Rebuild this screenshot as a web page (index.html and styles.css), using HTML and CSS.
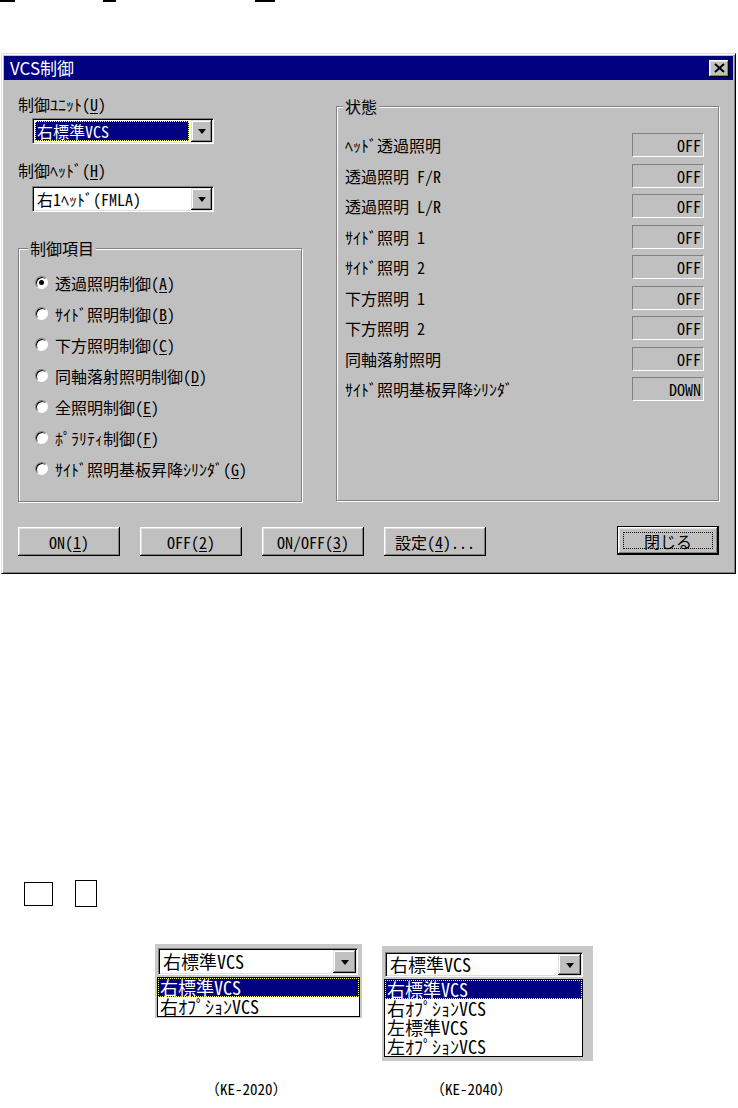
FILE: index.html
```html
<!DOCTYPE html>
<html lang="ja">
<head>
    <meta charset="UTF-8">
    <title>VCS制御</title>
    <link rel="stylesheet" href="styles.css">
</head>
<body>
    <div class="top-marks">
        <span class="top-mark top-mark-1"></span>
        <span class="top-mark top-mark-2"></span>
        <span class="top-mark top-mark-3"></span>
    </div>

    <div class="dialog">
        <div class="titlebar">
            <span class="title">VCS制御</span>
            <span class="close-btn">
                <svg width="11" height="10" viewBox="0 0 11 10"><path d="M1 1 L10 9 M10 1 L1 9" stroke="#000" stroke-width="2" fill="none"/></svg>
            </span>
        </div>

        <div class="dialog-body">
            <div class="columns">
                <div class="col-left">
                    <div class="label">制御ﾕﾆｯﾄ(<u>U</u>)</div>
                    <div class="combo combo-unit">
                        <div class="combo-field selected"><span>右標準VCS</span></div>
                        <div class="drop-btn"><span class="arrow"></span></div>
                    </div>

                    <div class="label label-head">制御ﾍｯﾄﾞ(<u>H</u>)</div>
                    <div class="combo combo-head">
                        <div class="combo-field"><span>右1ﾍｯﾄﾞ(FMLA)</span></div>
                        <div class="drop-btn"><span class="arrow"></span></div>
                    </div>

                    <div class="group group-items">
                        <span class="group-title">制御項目</span>
                        <ul class="radio-list">
                            <li class="radio-item"><span class="radio checked"></span><span>透過照明制御(<u>A</u>)</span></li>
                            <li class="radio-item"><span class="radio"></span><span>ｻｲﾄﾞ照明制御(<u>B</u>)</span></li>
                            <li class="radio-item"><span class="radio"></span><span>下方照明制御(<u>C</u>)</span></li>
                            <li class="radio-item"><span class="radio"></span><span>同軸落射照明制御(<u>D</u>)</span></li>
                            <li class="radio-item"><span class="radio"></span><span>全照明制御(<u>E</u>)</span></li>
                            <li class="radio-item"><span class="radio"></span><span>ﾎﾟﾗﾘﾃｨ制御(<u>F</u>)</span></li>
                            <li class="radio-item"><span class="radio"></span><span>ｻｲﾄﾞ照明基板昇降ｼﾘﾝﾀﾞ(<u>G</u>)</span></li>
                        </ul>
                    </div>
                </div>

                <div class="col-right">
                    <div class="group group-state">
                        <span class="group-title">状態</span>
                        <div class="status-list">
                            <div class="status-row"><span>ﾍｯﾄﾞ透過照明</span><span class="status-value">OFF</span></div>
                            <div class="status-row"><span>透過照明 F/R</span><span class="status-value">OFF</span></div>
                            <div class="status-row"><span>透過照明 L/R</span><span class="status-value">OFF</span></div>
                            <div class="status-row"><span>ｻｲﾄﾞ照明 1</span><span class="status-value">OFF</span></div>
                            <div class="status-row"><span>ｻｲﾄﾞ照明 2</span><span class="status-value">OFF</span></div>
                            <div class="status-row"><span>下方照明 1</span><span class="status-value">OFF</span></div>
                            <div class="status-row"><span>下方照明 2</span><span class="status-value">OFF</span></div>
                            <div class="status-row"><span>同軸落射照明</span><span class="status-value">OFF</span></div>
                            <div class="status-row"><span>ｻｲﾄﾞ照明基板昇降ｼﾘﾝﾀﾞ</span><span class="status-value">DOWN</span></div>
                        </div>
                    </div>
                </div>
            </div>

            <div class="buttons">
                <span class="btn"><span>ON(<u>1</u>)</span></span>
                <span class="btn"><span>OFF(<u>2</u>)</span></span>
                <span class="btn"><span>ON/OFF(<u>3</u>)</span></span>
                <span class="btn"><span>設定(<u>4</u>)...</span></span>
                <span class="btn btn-default"><span class="focus-rect">閉じる</span></span>
            </div>
        </div>
    </div>

    <div class="key-marks">
        <span class="key-mark key-mark-1"></span>
        <span class="key-mark key-mark-2"></span>
    </div>

    <div class="figures">
        <div class="fig-panel fig-2020">
            <div class="combo fig-combo">
                <div class="combo-field"><span>右標準VCS</span></div>
                <div class="drop-btn"><span class="arrow"></span></div>
            </div>
            <ul class="fig-list">
                <li class="fig-item selected">右標準VCS</li>
                <li class="fig-item">右ｵﾌﾟｼｮﾝVCS</li>
            </ul>
        </div>

        <div class="fig-panel fig-2040">
            <div class="combo fig-combo">
                <div class="combo-field"><span>右標準VCS</span></div>
                <div class="drop-btn"><span class="arrow"></span></div>
            </div>
            <ul class="fig-list">
                <li class="fig-item selected">右標準VCS</li>
                <li class="fig-item">右ｵﾌﾟｼｮﾝVCS</li>
                <li class="fig-item">左標準VCS</li>
                <li class="fig-item">左ｵﾌﾟｼｮﾝVCS</li>
            </ul>
        </div>

        <div class="caption caption-2020">（KE-2020）</div>
        <div class="caption caption-2040">（KE-2040）</div>
    </div>
</body>
</html>
```

FILE: styles.css
```css
* {
    box-sizing: border-box;
}

body {
    margin: 0;
    background: #fff;
    color: #000;
    font-family: "Noto Sans Mono CJK JP", "Noto Sans CJK JP", monospace;
    font-size: 16px;
    line-height: 16px;
}

ul {
    list-style: none;
    margin: 0;
    padding: 0;
}

u {
    text-underline-offset: 2px;
}

/* remains of the previous page */
.top-marks {
    display: flex;
    height: 2px;
}

.top-mark {
    height: 2px;
    background: #000;
}

.top-mark-1 { width: 15px; }
.top-mark-2 { width: 13px; margin-left: 88px; }
.top-mark-3 { width: 20px; margin-left: 139px; }

/* dialog window */
.dialog {
    display: flex;
    flex-direction: column;
    width: 735px;
    height: 521px;
    margin: 51px 0 0 1px;
    padding: 2px;
    background: #c0c0c0;
    border: 1px solid;
    border-color: #dfdfdf #000 #000 #dfdfdf;
    box-shadow: inset 1px 1px #fff, inset -1px -1px #808080;
}

.titlebar {
    display: flex;
    align-items: center;
    justify-content: space-between;
    height: 24px;
    padding: 0 4px 0 6px;
    background: #000080;
    color: #fff;
}

.title {
    font-family: "Noto Sans CJK JP", sans-serif;
    font-size: 17px;
}

.close-btn {
    display: flex;
    align-items: center;
    justify-content: center;
    width: 20px;
    height: 17px;
    background: #c0c0c0;
    box-shadow: inset -1px -1px #000, inset 1px 1px #fff, inset -2px -2px #808080, inset 2px 2px #dfdfdf;
}

.dialog-body {
    flex: 1;
    display: flex;
    flex-direction: column;
    padding: 0 14px 15px 14px;
}

.columns {
    display: flex;
    justify-content: space-between;
}

.col-left {
    width: 284px;
    padding-top: 16px;
}

.col-right {
    width: 383px;
    padding-top: 26px;
}

.label {
    height: 16px;
}

.label-head {
    margin-top: 18px;
}

/* combo box */
.combo {
    display: flex;
    width: 182px;
    height: 26px;
    margin: 6px 0 0 14px;
    padding: 1px;
    background: #fff;
    border: 1px solid;
    border-color: #808080 #fff #fff #808080;
    box-shadow: inset 1px 1px #000, inset -1px -1px #dfdfdf;
}

.combo-head {
    margin-top: 8px;
}

.combo-field {
    flex: 1;
    display: flex;
    align-items: center;
    margin: 1px 2px 1px 1px;
    padding-left: 2px;
}

.combo-field.selected {
    background: #000080;
    color: #fff;
    outline: 1px dotted #ffff80;
    outline-offset: -1px;
}

.drop-btn {
    display: flex;
    align-items: center;
    justify-content: center;
    width: 21px;
    background: #c0c0c0;
    box-shadow: inset -1px -1px #000, inset 1px 1px #dfdfdf, inset -2px -2px #808080, inset 2px 2px #fff;
}

.arrow {
    width: 0;
    height: 0;
    border-left: 4px solid transparent;
    border-right: 4px solid transparent;
    border-top: 5px solid #000;
    margin-top: 1px;
}

/* etched group box */
.group {
    position: relative;
    border: 1px solid #808080;
    box-shadow: 1px 1px 0 #fff, inset 1px 1px 0 #fff;
}

.group-title {
    position: absolute;
    top: -9px;
    left: 9px;
    padding: 0 2px;
    background: #c0c0c0;
    line-height: 16px;
}

.group-items {
    height: 254px;
    margin-top: 36px;
}

.group-state {
    height: 395px;
}

.group-state .group-title {
    left: 6px;
}

.radio-list {
    padding: 18px 0 0 16px;
}

.radio-item {
    display: flex;
    align-items: center;
    gap: 7px;
    height: 31px;
}

.radio {
    position: relative;
    width: 13px;
    height: 13px;
    border-radius: 50%;
    background: #fff;
    border: 1px solid;
    border-color: #808080 #fff #fff #808080;
    box-shadow: inset 1px 1px #000;
}

.radio.checked::after {
    content: "";
    position: absolute;
    left: 3px;
    top: 3px;
    width: 5px;
    height: 5px;
    border-radius: 50%;
    background: #000;
}

.status-list {
    display: flex;
    flex-direction: column;
    gap: 6.5px;
    padding: 26px 14px 0 8px;
}

.status-row {
    display: flex;
    align-items: center;
    justify-content: space-between;
    height: 24px;
}

.status-value {
    width: 72px;
    height: 24px;
    padding-right: 2px;
    border: 1px solid;
    border-color: #808080 #fff #fff #808080;
    text-align: right;
    line-height: 22px;
}

/* push buttons */
.buttons {
    display: flex;
    align-items: flex-start;
    gap: 20px;
    margin-top: 25px;
}

.btn {
    display: flex;
    align-items: center;
    justify-content: center;
    width: 102px;
    height: 29px;
    background: #c0c0c0;
    box-shadow: inset -1px -1px #000, inset 1px 1px #fff, inset -2px -2px #808080, inset 2px 2px #dfdfdf;
}

.btn-default {
    margin: -1px 0 0 auto;
    padding: 5px;
    border: 1px solid #000;
}

.focus-rect {
    flex: 1;
    align-self: stretch;
    display: flex;
    align-items: center;
    justify-content: center;
    border: 1px dotted #000;
}

/* lower part of the page */
.key-marks {
    display: flex;
    align-items: center;
    gap: 22px;
    margin: 306px 0 0 24px;
}

.key-mark {
    border: 1px solid #000;
}

.key-mark-1 { width: 29px; height: 24px; }
.key-mark-2 { width: 22px; height: 27px; }

.figures {
    display: grid;
    grid-template-columns: 207px 211px;
    column-gap: 20px;
    row-gap: 18px;
    align-items: start;
    margin: 37px 0 0 155px;
}

.fig-panel {
    background: #c8c8c8;
    font-size: 18px;
    line-height: 19px;
}

.fig-2020 {
    padding: 4px 4px 1px 3px;
}

.fig-2040 {
    margin-top: 2px;
    padding: 6px 10px 4px 3px;
}

.fig-panel .fig-combo {
    width: 200px;
    height: 27px;
    margin: 0;
}

.fig-2040 .fig-combo {
    width: 198px;
    height: 25px;
}

.fig-combo .drop-btn {
    width: 23px;
}

.fig-list {
    margin: 2px 0 0 -1px;
    background: #fff;
    border: 1px solid #000;
}

.fig-2020 .fig-list {
    width: 203px;
}

.fig-2040 .fig-list {
    width: 199px;
}

.fig-item {
    height: 19px;
    padding-left: 2px;
}

.fig-item.selected {
    background: #000080;
    color: #fff;
    outline: 1px dotted #ffff80;
    outline-offset: -1px;
}

.caption {
    font-size: 15px;
    line-height: 20px;
}

.caption-2020 {
    padding-left: 50px;
}

.caption-2040 {
    padding-left: 48px;
}
```
